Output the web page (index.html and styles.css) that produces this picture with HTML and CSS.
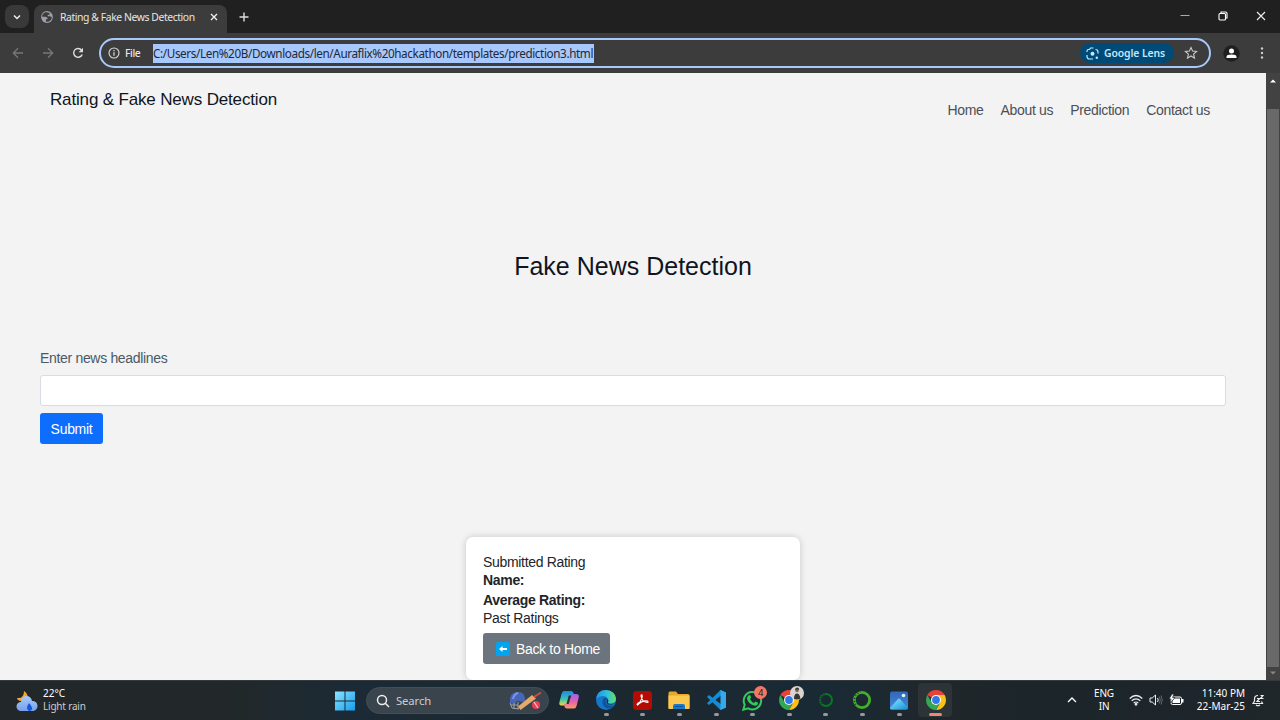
FILE: index.html
```html
<!DOCTYPE html>
<html lang="en">
<head>
<meta charset="utf-8">
<title>Rating &amp; Fake News Detection</title>
<link rel="stylesheet" href="styles.css">
</head>
<body>
<div class="screen">
  <header class="tabstrip">
    <div class="tab-search"><svg width="10" height="10" viewBox="0 0 10 10"><path d="M2 3.5l3 3 3-3" fill="none" stroke="#eee" stroke-width="1.5"/></svg></div>
    <div class="tab">
      <svg width="12" height="12" viewBox="0 0 12 12"><circle cx="6" cy="6" r="5.9" fill="#9aa0a6"/><path d="M5.5 1.2c-3 0-4.4 2.8-4.3 4.5H4.500l2 1v1.500H5v2.500c3 .5 5.700-1.500 5.900-4.500L9 5.200H6.700V3.800h1.800V2z" fill="#3c3c3c"/></svg>
      <span class="tab-title">Rating &amp; Fake News Detection</span>
      <svg class="tab-close" width="8" height="8" viewBox="0 0 8 8"><path d="M1 1l6 6M7 1L1 7" stroke="#eee" stroke-width="1.400"/></svg>
    </div>
    <svg class="new-tab" width="10" height="10" viewBox="0 0 10 10"><path d="M5 .5v9M.5 5h9" stroke="#ddd" stroke-width="1.400"/></svg>
    <div class="window-controls">
      <svg width="10" height="10" viewBox="0 0 10 10"><path d="M.5 4.500h9" stroke="#aaa"/></svg>
      <svg width="10" height="10" viewBox="0 0 10 10" fill="none" stroke="#fff" stroke-width="1.100"><rect x="1" y="2.500" width="6.500" height="6.500" rx="1"/><path d="M3 2.300V1h4.500Q9 1 9 2.500V7H7.700"/></svg>
      <svg width="10" height="10" viewBox="0 0 10 10"><path d="M1 1l8 8M9 1L1 9" stroke="#eee" stroke-width="1.100"/></svg>
    </div>
  </header>
  <div class="toolbar">
    <svg class="nav" width="12" height="12" viewBox="0 0 12 12" fill="none" stroke="#777" stroke-width="1.300"><path d="M11 6H1.500M6 1.300L1.300 6 6 10.700"/></svg>
    <svg class="nav" width="12" height="12" viewBox="0 0 12 12" fill="none" stroke="#777" stroke-width="1.300"><path d="M1 6h9.500M6 1.300L10.700 6 6 10.700"/></svg>
    <svg class="nav reload" width="12" height="12" viewBox="0 0 12 12"><path d="M9.600 3.200A4.400 4.400 0 1 0 10.200 7.400" fill="none" stroke="#ddd" stroke-width="1.400"/><path d="M11 .8v4.400H6.600z" fill="#ddd"/></svg>
    <div class="omnibox">
      <svg width="12" height="12" viewBox="0 0 12 12"><circle cx="6" cy="6" r="5" fill="none" stroke="#ddd" stroke-width="1.100"/><path d="M6 5.200v3.500M6 3.100v1.200" stroke="#ddd" stroke-width="1.200"/></svg>
      <span class="scheme">File</span>
      <span class="url">C:/Users/Len%20B/Downloads/len/Auraflix%20hackathon/templates/prediction3.html</span>
      <div class="lens">
        <svg width="13" height="13" viewBox="0 0 13 13" fill="none" stroke="#c2e7ff" stroke-width="1.200"><path d="M1 5V4Q1 2.500 2.500 2.500h1L4.500 1h3M9.500 2.500Q12 2.500 12 5v1.500M1 8v1.500Q1 12 3.500 12H7"/><circle cx="6.500" cy="6.800" r="2" fill="#c2e7ff" stroke="none"/><circle cx="10.800" cy="10.800" r="1.200" fill="#c2e7ff" stroke="none"/></svg>
        <span>Google Lens</span>
      </div>
      <svg class="star" width="14" height="14" viewBox="0 0 14 14"><path d="M7 1.500l1.600 3.600 4 .4-3 2.700.9 3.900L7 10l-3.500 2.100.9-3.900-3-2.700 4-.4z" fill="none" stroke="#ccc" stroke-width="1.100"/></svg>
    </div>
    <svg class="profile" width="17" height="17" viewBox="0 0 17 17"><circle cx="8.500" cy="8.500" r="8.200" fill="#202020"/><circle cx="8.500" cy="6" r="2.500" fill="#fff"/><path d="M3.500 13v-1.300Q3.500 9.500 8.500 9.500t5 2.200V13z" fill="#fff"/></svg>
    <svg class="menu" width="4" height="14" viewBox="0 0 4 14" fill="#ccc"><circle cx="2" cy="2.500" r="1.200"/><circle cx="2" cy="7" r="1.200"/><circle cx="2" cy="11.500" r="1.200"/></svg>
  </div>
  <div class="viewport">
    <main class="page">
      <nav class="site-nav">
        <div class="brand">Rating &amp; Fake News Detection</div>
        <div class="links"><a>Home</a><a>About us</a><a>Prediction</a><a>Contact us</a></div>
      </nav>
      <h1 class="headline">Fake News Detection</h1>
      <form class="news-form">
        <label for="news">Enter news headlines</label>
        <input id="news" type="text">
        <button type="button">Submit</button>
      </form>
      <section class="card">
        <div class="row first">Submitted Rating</div>
        <div class="row name"><b>Name:</b></div>
        <div class="row average"><b>Average Rating:</b></div>
        <div class="row">Past Ratings</div>
        <div class="back"><svg width="14" height="14" viewBox="0 0 14 14"><rect width="14" height="14" rx="1.500" fill="#00a4ef"/><path d="M3 7l3.500-3v2H11v2H6.500v2z" fill="#fff"/></svg><span>Back to Home</span></div>
      </section>
    </main>
    <div class="scrollbar">
      <svg width="6" height="4" viewBox="0 0 6 4"><path d="M0 3.500L3 .5l3 3z" fill="#fff"/></svg>
      <div class="thumb"></div>
      <svg width="6" height="4" viewBox="0 0 6 4"><path d="M0 .5l3 3 3-3z" fill="#888"/></svg>
    </div>
  </div>
  <footer class="taskbar">
    <div class="weather">
      <svg width="22" height="24" viewBox="0 0 22 24"><defs><linearGradient id="cloud" x2="0" y2="1"><stop stop-color="#a9cbf8"/><stop offset="1" stop-color="#769fee"/></linearGradient></defs><path d="M8 2q5 3 3 9L4 12Q1 11 1 9q7 1 7-7z" fill="#f5a92c"/><path d="M5 22a4.500 4.500 0 0 1 0-9 5.500 5.500 0 0 1 11-1 5 5 0 0 1 1 10z" fill="url(#cloud)"/><path d="M13 14q-3 4-1.500 6.500t4 .5q2-2-2.500-7" fill="#1457dc"/></svg>
      <div><div class="temp">22°C</div><div class="rain">Light rain</div></div>
    </div>
    <svg class="start" width="20" height="20" viewBox="0 0 20 20"><defs><linearGradient id="win" x2="1" y2="1"><stop stop-color="#8de4ff"/><stop offset="1" stop-color="#159bec"/></linearGradient></defs><path d="M0 .5h9.500v9H0zM10.500.5H20v9h-9.500zM0 10.500h9.500v9H0zM10.500 10.500H20v9h-9.500z" fill="url(#win)"/></svg>
    <div class="search">
      <svg width="14" height="14" viewBox="0 0 14 14" fill="none" stroke="#eee" stroke-width="1.500"><circle cx="6" cy="6" r="4.500"/><path d="M9.300 9.300l3.700 3.700"/></svg>
      <span>Search</span>
      <svg class="cricket" width="34" height="20" viewBox="0 0 34 20"><path d="M2 11Q1 2 9 1t8 8l-1 2-7-1-2 3-5-1z" fill="#4965b5"/><path d="M5 8Q6 3 10 2" stroke="#7896e8" stroke-width="2" fill="none"/><path d="M2 12l2 5 7 1M3 14h7M6 12v6M10 11v7" stroke="#9ca3ad" fill="none"/><path d="M10 15.500L24 4l4 3.500-15.500 11.500z" fill="#e7a96c"/><path d="M26 6l7-4.500" stroke="#c84f43" stroke-width="2"/><circle cx="28" cy="14" r="4" fill="#e73f53"/><path d="M26 11l4 6" stroke="#ffc4ca" stroke-width="1.200"/></svg>
    </div>
    <div class="apps">
      <div class="app idle"><svg width="20" height="20" viewBox="0 0 20 20"><defs><linearGradient id="cpa" x2="0" y2="1"><stop stop-color="#2387e8"/><stop offset=".55" stop-color="#35c5b2"/><stop offset="1" stop-color="#f2d54b"/></linearGradient><linearGradient id="cpb" x2="0" y2="1"><stop stop-color="#9766ee"/><stop offset=".5" stop-color="#e35fae"/><stop offset="1" stop-color="#ff9966"/></linearGradient></defs><path d="M5 1h7q2 0 2.500 2l.7 2.500h-2.500q-2 0-2.500 2L8 13.500q-.6 2-2.500 2H3Q-.5 15.500.5 12l2-8Q3.200 1 5 1z" fill="url(#cpa)"/><path d="M15 18.500H8q-2 0-2.500-2L5 14h2q2 0 2.500-2L12 6q.6-2 2.500-2h2.500q3.500 0 2.700 3.500l-2 8q-.7 3-2.700 3z" fill="url(#cpb)"/><path d="M9.700 5.500H12L9.700 14H7.500z" fill="#25313c"/></svg></div>
      <div class="app"><svg width="20" height="20" viewBox="0 0 20 20"><defs><linearGradient id="edge" x2="1"><stop stop-color="#238fe5"/><stop offset=".55" stop-color="#2dc2dd"/><stop offset="1" stop-color="#69df63"/></linearGradient></defs><circle cx="10" cy="10" r="10" fill="#1477ca"/><path d="M0 9Q1 0 10 0q9 .5 10 8.500 0 5-6 5-3 0-3-1.500 2-2 .5-4Q6.500 3.500 0 9z" fill="url(#edge)"/><path d="M7 9.500Q5 15 10 18q5 2 8-3-6 2-8-2-1-2 .5-3.500T9 7.500Q7.500 8 7 9.500z" fill="#12549b"/><path d="M10.500 9q1 1.500 0 3 .5 3 5 2.500 3 0 4-1.800-1 1.300-4 1.300-4 0-3.500-2 1.500-2-1.500-3z" fill="#1c2b34"/></svg></div>
      <div class="app"><svg width="19" height="19" viewBox="0 0 19 19"><rect width="19" height="19" rx="3.500" fill="#b40b05"/><path d="M4.500 14Q3 13 7 11q3-5 2-7-1-.5-1 1 1 6 6 6.500 2 0 .5-1.500-5-1-10 4z" fill="none" stroke="#fff" stroke-width="1.100"/></svg></div>
      <div class="app"><svg width="22" height="20" viewBox="0 0 22 20"><path d="M.5 3Q.5 1.500 2 1.500h6L10 4h10q1.500 0 1.500 1.500V18q0 1-1 1h-19q-1 0-1-1z" fill="#e9a72b"/><path d="M.5 5.500h21V18q0 1-1 1h-19q-1 0-1-1z" fill="#fbc94f"/><path d="M5 19v-3q0-2 2-2h8q2 0 2 2v3z" fill="#1679ca"/><path d="M7 16.500h8" stroke="#0e559b"/></svg></div>
      <div class="app"><svg width="20" height="20" viewBox="0 0 20 20"><path d="M14.500 0L20 2.500v15L14.500 20 1 7l2-2 12 9.300V5.500L3 15l-2-1.800z" fill="#168bd2"/><path d="M14.500 0L20 2.500v15L14.500 20z" fill="#35a9ee"/></svg></div>
      <div class="app"><svg width="21" height="21" viewBox="0 0 21 21"><path d="M1.300 19.700l1.400-5A8.700 8.700 0 1 1 6.200 18.300z" fill="none" stroke="#35c85a" stroke-width="2"/><path d="M6 6q2-2 2.500 0l.7 1.500L8 9q1.500 3 4 4l1.500-1.500 2.500 1.200q0 3-3 3-7-1.500-8-7Q5 7 6 6z" fill="#35c85a"/></svg><span class="badge">4</span></div>
      <div class="app"><svg width="20" height="20" viewBox="0 0 20 20"><path d="M10 10L1.340 5A10 10 0 0 1 18.660 5z" fill="#e84335"/><path d="M10 10V5h8.660A10 10 0 0 1 10 20l4.300-7.500z" fill="#fbc116"/><path d="M1.340 5L5.700 12.500 10 15l3.500-1.500L10 20A10 10 0 0 1 1.340 5z" fill="#32a852"/><circle cx="10" cy="10" r="5" fill="#fff"/><circle cx="10" cy="10" r="3.900" fill="#2f79e8"/></svg><svg class="avatar" width="14" height="14" viewBox="0 0 14 14"><circle cx="7" cy="7" r="7" fill="#d9d4cd"/><circle cx="7" cy="4.500" r="1.800" fill="#826455"/><path d="M5 4Q5 1.500 7 1.500q2.500 0 2 2.500L7.500 3.300zM4 13q0-5.500 3-5.500 2.500 0 3.500 5-3 1.500-6.500.5z" fill="#353638"/></svg></div>
      <div class="app"><svg width="20" height="20" viewBox="0 0 20 20"><circle cx="10" cy="10" r="6" fill="none" stroke="#087622" stroke-width="2"/><path d="M5.500 14A6 6 0 0 1 9 4" fill="none" stroke="#183b2a" stroke-width="2" stroke-dasharray="1 1.500"/></svg></div>
      <div class="app"><svg width="20" height="20" viewBox="0 0 20 20"><circle cx="10" cy="10" r="7.600" fill="none" stroke="#43b02a" stroke-width="2.800"/><path d="M4 14.500A7.500 7.500 0 0 1 8.500 2.500" fill="none" stroke="#1d3834" stroke-width="1.600" stroke-dasharray="1 2"/></svg></div>
      <div class="app"><svg width="18" height="19" viewBox="0 0 18 19"><defs><linearGradient id="photo" x2="0" y2="1"><stop stop-color="#3268b9"/><stop offset="1" stop-color="#438bd7"/></linearGradient><linearGradient id="hill" x2="1" y2="1"><stop stop-color="#8eeaff"/><stop offset="1" stop-color="#118edc"/></linearGradient></defs><rect y=".5" width="18" height="18" rx="2" fill="url(#photo)"/><path d="M0 17L8 8q1-1 2 0l8 9q0 1.500-1.500 1.500h-15Q0 18.500 0 17z" fill="url(#hill)"/><circle cx="13.500" cy="4.500" r="1.800" fill="#e3f3ff"/></svg></div>
      <div class="app active"><svg width="20" height="20" viewBox="0 0 20 20"><path d="M10 10L1.340 5A10 10 0 0 1 18.660 5z" fill="#e84335"/><path d="M10 10V5h8.660A10 10 0 0 1 10 20l4.300-7.500z" fill="#fbc116"/><path d="M1.340 5L5.700 12.500 10 15l3.500-1.500L10 20A10 10 0 0 1 1.340 5z" fill="#32a852"/><circle cx="10" cy="10" r="5" fill="#fff"/><circle cx="10" cy="10" r="3.900" fill="#2f79e8"/></svg></div>
    </div>
    <div class="tray">
      <svg class="chevron" width="10" height="8" viewBox="0 0 10 8"><path d="M1 6l4-4 4 4" fill="none" stroke="#fff" stroke-width="1.300"/></svg>
      <div class="language">ENG<br>IN</div>
      <svg class="wifi" width="14" height="12" viewBox="0 0 14 12" fill="none" stroke="#eee" stroke-width="1.200"><path d="M.7 4.500q6.300-6 12.600 0M2.700 6.800q4.300-4 8.600 0M4.700 9q2.300-2 4.600 0"/><circle cx="7" cy="10.300" r=".8" fill="#eee"/></svg>
      <svg class="sound" width="14" height="12" viewBox="0 0 14 12" fill="none" stroke="#eee"><path d="M1 4h2.200L6.500 1v10L3.200 8H1z"/><path d="M8.500 4q1.500 2 0 4"/><path d="M10.300 2.500q2 3.500 0 7M12 1.500q2.500 4.500 0 9" stroke="#666"/></svg>
      <svg class="battery" width="15" height="12" viewBox="0 0 15 12"><rect x="2" y="3" width="10.500" height="7.500" rx="1.500" fill="none" stroke="#fff"/><path d="M3.500 6.500L5 4.500h6V9H3.500zM13 5h1.500v3.500H13z" fill="#fff"/><path d="M3 0L0 5h2l-.5 4L6 3.500H3.500L5 0z" fill="#fff" stroke="#20272b" stroke-width=".7"/></svg>
      <div class="clock">11:40 PM<br>22-Mar-25</div>
      <svg class="bell" width="12" height="13" viewBox="0 0 12 13" fill="none" stroke="#eee" stroke-width="1.200"><path d="M6 1.500Q2.500 1.500 2.500 5v2L1 9.500h9.500L9.500 7.500M4 11q2 1.500 4 0M5 4.500h2.500L5 7.500h3M8.500 1.500H11L8.500 4.500H11.500"/></svg>
    </div>
  </footer>
</div>
</body>
</html>
```
FILE: styles.css
```css
* { box-sizing: border-box; }
body { margin: 0; overflow: hidden; font-family: "Liberation Sans", Arial, sans-serif; }
svg { display: block; flex: none; }
.screen { width: 1280px; height: 720px; display: flex; flex-direction: column; background: #3c3c3c; }
.tabstrip { height: 33px; flex: none; display: flex; background: #202020; padding: 5px 14px 0 5px; color: #e6e6e6; font-family: "Noto Sans", sans-serif; }
.tab-search { width: 24px; height: 23px; border-radius: 8px; background: #393939; display: grid; place-items: center; }
.tab { width: 193px; height: 28px; margin-left: 5px; padding: 0 9px 4px 7px; background: #3c3c3c; border-radius: 8px 8px 0 0; display: flex; align-items: center; }
.tab-title { margin-left: 7px; width: 143px; font-size: 10.4px; letter-spacing: -.42px; white-space: nowrap; }
.tab-close { margin-left: 7px; }
.new-tab { margin: 7px 0 0 12px; }
.window-controls { margin: 6px 0 0 auto; display: flex; gap: 28px; }
.toolbar { height: 40px; flex: none; display: flex; align-items: center; padding: 0 16px 0 12px; background: #3c3c3c; font-family: "Noto Sans", sans-serif; }
.nav { margin-right: 18px; }
.reload { margin-right: 15px; }
.omnibox { width: 1112px; height: 30px; border: 2px solid #a8c7fa; border-radius: 15px; display: flex; align-items: center; padding: 0 11px 0 7px; color: #e6e6e6; }
.scheme { width: 22px; margin-left: 5px; font-size: 10.3px; letter-spacing: -.4px; font-weight: 500; }
.url { margin-left: 6px; width: 441px; height: 19px; background: #a8c7fa; color: #202938; font-size: 11.7px; line-height: 18px; letter-spacing: -.38px; white-space: nowrap; }
.lens { margin-left: auto; width: 94px; height: 20px; background: #004a77; border-radius: 10px; display: flex; align-items: center; padding-left: 6px; gap: 5px; color: #c2e7ff; font-size: 10.4px; font-weight: 600; letter-spacing: -.1px; white-space: nowrap; }
.star { margin-left: 10px; }
.profile { margin-left: 12px; }
.menu { margin-left: auto; }
.viewport { height: 607px; flex: none; display: flex; overflow: hidden; }
.page { width: 1266px; display: flex; flex-direction: column; background: #f3f3f3; color: #212529; overflow: hidden; }
.site-nav { display: flex; justify-content: space-between; height: 60px; flex: none; padding: 17px 56px 0 50px; }
.brand { font-size: 17px; line-height: 20px; letter-spacing: -.16px; color: #101522; }
.links { display: flex; gap: 17px; padding-top: 12px; font-size: 14px; letter-spacing: -.32px; line-height: 17px; color: #495057; }
.headline { margin: 117px 0 0; height: 32px; flex: none; text-align: center; font-size: 25px; line-height: 32px; font-weight: 400; color: #101522; }
.news-form { margin: 67px 40px 0; flex: none; display: flex; flex-direction: column; align-items: flex-start; }
.news-form label { font-size: 14px; letter-spacing: -.32px; line-height: 18px; color: #495966; }
.news-form input { width: 100%; height: 31px; margin-top: 8px; border: 1px solid #d9dde1; border-radius: 3px; background: #fff; }
.news-form button { margin-top: 7px; width: 63px; height: 31px; padding: 0; border: 0; border-radius: 3px; background: #0d6efd; color: #fff; font: 14px "Liberation Sans", sans-serif; letter-spacing: -.3px; }
.card { width: 334px; height: 143px; flex: none; margin: 93px 0 0 466px; padding: 16px 17px; background: #fff; border-radius: 7px; box-shadow: 0 0 7px rgba(0,0,0,.18); font-size: 14px; letter-spacing: -.32px; }
.row { height: 18px; line-height: 18px; }
.name { height: 20px; }
.average { height: 18px; }
.back { width: 127px; height: 31px; margin-top: 6px; padding: 0 10px 0 13px; border-radius: 3px; background: #6c757d; color: #fff; display: flex; align-items: center; justify-content: space-between; white-space: nowrap; }
.scrollbar { width: 14px; background: #424242; display: flex; flex-direction: column; align-items: center; padding: 6px 0 5px; }
.thumb { width: 12px; height: 558px; margin: 26px 0 4px; background: #696969; }
.taskbar { position: relative; height: 40px; flex: none; display: flex; align-items: center; background: linear-gradient(90deg,#222829 0,#222829 18%,#1b2a35 27%,#1c2830 52%,#192a35 64%,#20272b 73%,#1b252a 81%,#20262a 100%); border-top: 1px solid #343b3e; color: #fff; font-family: "Noto Sans", sans-serif; font-size: 10px; line-height: 13px; }
.weather { width: 335px; padding-left: 16px; display: flex; gap: 5px; align-items: center; }
.weather > div { margin-top: -2px; }
.rain { color: #ccc; letter-spacing: -.2px; }
.search { width: 183px; height: 27px; margin-left: 11px; padding: 0 6px 0 9px; border-radius: 14px; background: #3a444c; border: 1px solid #454e55; display: flex; align-items: center; color: #ccc; font-size: 11.3px; }
.search span { margin-left: 6px; letter-spacing: -.1px; }
.cricket { margin-left: auto; }
.apps { margin-left: 2px; display: grid; grid-template-columns: repeat(11,36.65px); }
.app { position: relative; height: 39px; display: grid; place-items: center; }
.app::after { content: ""; position: absolute; bottom: 4px; left: 16px; width: 5px; height: 3px; border-radius: 2px; background: #999; }
.app > svg:first-child { margin-top: -1px; }
.idle::after { display: none; }
.active::before { content: ""; position: absolute; z-index: 0; left: 1px; top: 2px; width: 34px; height: 34px; border-radius: 4px; background: #2d3438; }
.active svg { position: relative; z-index: 1; }
.active::after { left: 12px; width: 13px; background: #ef8775; }
.badge { position: absolute; left: 20px; top: 5px; width: 13px; height: 13px; border-radius: 7px; background: #f07866; color: #222; text-align: center; font-size: 9.5px; line-height: 13px; }
.avatar { position: absolute; left: 19px; top: 5px; }
.tray { margin: -1px 0 0 auto; padding-right: 16px; display: flex; align-items: center; text-align: right; white-space: nowrap; }
.language { width: 24px; margin-left: 15px; text-align: center; letter-spacing: -.2px; }
.wifi { margin-left: 13px; }
.sound { margin-left: 6px; }
.battery { margin-left: 6px; }
.clock { width: 52px; margin-left: 9px; }
.bell { margin-left: 7px; }
```
